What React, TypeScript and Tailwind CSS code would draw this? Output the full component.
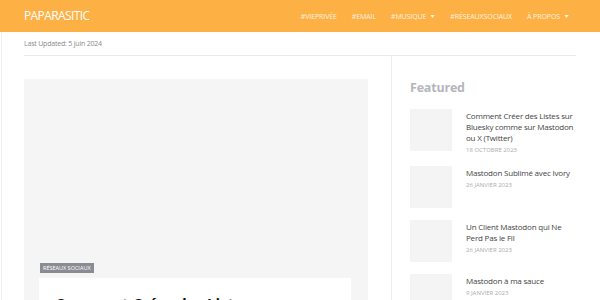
import React from 'react';

const navItems = [
  { label: '#VIEPRIVÉE' },
  { label: '#EMAIL' },
  { label: '#MUSIQUE', caret: true },
  { label: '#RÉSEAUXSOCIAUX' },
  { label: 'À PROPOS', caret: true },
];

const featured = [
  { title: 'Comment Créer des Listes sur Bluesky comme sur Mastodon ou X (Twitter)', date: '18 OCTOBRE 2023' },
  { title: 'Mastodon Sublimé avec Ivory', date: '26 JANVIER 2023' },
  { title: 'Un Client Mastodon qui Ne Perd Pas le Fil', date: '26 JANVIER 2023' },
  { title: 'Mastodon à ma sauce', date: '9 JANVIER 2023' },
];

const Caret = () => (
  <svg width="5" height="3" viewBox="0 0 6 4" className="ml-[4px] inline-block">
    <path d="M0 0h6L3 4z" fill="currentColor" />
  </svg>
);

const App = () => {
  return (
    <div className="w-[600px] h-[300px] overflow-hidden bg-white font-['Open_Sans',sans-serif]">
      <header className="h-[32px] bg-[#fdb044] flex items-center pl-[24px] pr-[31px]">
        <div className="text-white text-[12px] tracking-[-0.6px] leading-none">PAPARASITIC</div>
        <nav className="ml-auto flex items-center gap-[15px]">
          {navItems.map((item) => (
            <span key={item.label} className="text-[7px] text-[#fff3e0] flex items-center tracking-[-0.1px] leading-none">
              {item.label}
              {item.caret && <Caret />}
            </span>
          ))}
        </nav>
      </header>

      <div className="border-l border-[#f0f0f0] ml-[1px] h-[268px]">
        <div className="w-[552px] ml-[22px]">
          <div className="h-[23px] flex items-center pt-[1px] text-[7px] tracking-[-0.2px] text-[#8a8a8a]">
            Last Updated: 5 juin 2024
          </div>
          <div className="border-t border-[#e9e9e9]" />

          <div className="flex">
            <div className="w-[368px] pt-[23px] pr-[23px]">
              <div className="h-[260px] bg-[#f5f5f5] relative">
                <div className="absolute left-[16px] top-[184px] bg-[#8b8c93] text-white text-[5.5px] leading-[10px] px-[3px] uppercase">
                  Réseaux sociaux
                </div>
                <div className="absolute left-[15px] right-[17px] top-[199px] h-[80px] bg-white px-[16px] pt-[15px]">
                  <div className="text-[15px] font-bold text-[#111] leading-[20px]">
                    Comment Créer des Listes sur Bluesky comme sur Mastodon ou X (Twitter)
                  </div>
                </div>
              </div>
            </div>

            <aside className="flex-1 border-l border-[#eeeeee] pl-[18px] pt-[23px]">
              <h2 className="text-[12.5px] font-bold text-[#b4b6bb] tracking-[-0.2px] leading-[18px] mb-[12px]">
                Featured
              </h2>
              <div className="flex flex-col gap-[12px]">
                {featured.map((f) => (
                  <div key={f.title} className="flex">
                    <div className="w-[42px] h-[42px] bg-[#f4f4f4] shrink-0" />
                    <div className="ml-[14px] pt-[1px] w-[110px]">
                      <div className="text-[8px] leading-[11px] tracking-[-0.2px] text-[#444]">{f.title}</div>
                      <div className="text-[6px] text-[#aaa] mt-[3px] leading-[8px]">{f.date}</div>
                    </div>
                  </div>
                ))}
              </div>
            </aside>
          </div>
        </div>
      </div>
    </div>
  );
};

export default App;
